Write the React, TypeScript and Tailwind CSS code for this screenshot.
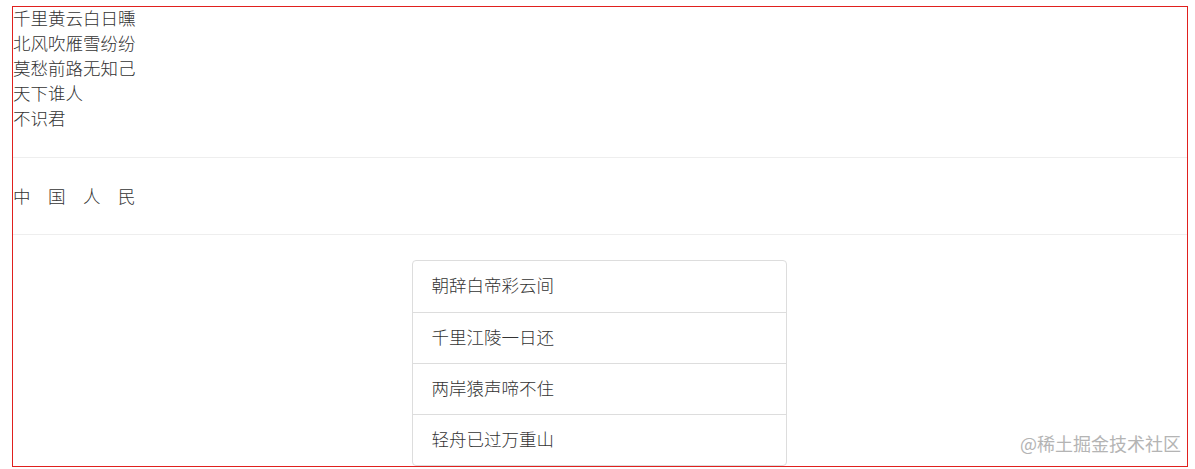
export default function App() {
  const lines = ["千里黄云白日曛", "北风吹雁雪纷纷", "莫愁前路无知己", "天下谁人", "不识君"]
  const items = ["朝辞白帝彩云间", "千里江陵一日还", "两岸猿声啼不住", "轻舟已过万重山"]

  return (
    <div
      className="relative w-[1195px] h-[469px] bg-white text-[#333] overflow-hidden"
      style={{ fontFamily: '"Noto Sans CJK SC", "Noto Sans", sans-serif' }}
    >
      {/* red outline box */}
      <div className="ml-[12px] mt-[6px] w-[1176px] h-[461px] border border-[#e0201e] overflow-hidden">
        {/* poem lines */}
        <div className="-mt-[2px] pb-[27px] border-b border-[#eeeeee] font-light">
          {lines.map((l) => (
            <div key={l} className="text-[17.5px] leading-[25px]">
              {l}
            </div>
          ))}
        </div>

        {/* spaced text */}
        <div className="h-[77px] flex items-center border-b border-[#eeeeee]">
          <span className="text-[17.5px] tracking-[17.5px] font-light">中国人民</span>
        </div>

        {/* list */}
        <div className="flex justify-center pt-[25px]">
          <ul className="w-[375px] border border-[#dddddd] rounded-[4px] -translate-x-[1px]">
            {items.map((t, i) => (
              <li
                key={t}
                className={`h-[51px] flex items-center pl-[19px] pb-[2px] text-[17.5px] font-light ${i > 0 ? "border-t border-[#dddddd]" : ""}`}
              >
                {t}
              </li>
            ))}
          </ul>
        </div>
      </div>

      {/* watermark */}
      <div className="absolute right-[14px] top-[430px] text-[18px] text-[#b4b4b4]">@稀土掘金技术社区</div>
    </div>
  )
}
